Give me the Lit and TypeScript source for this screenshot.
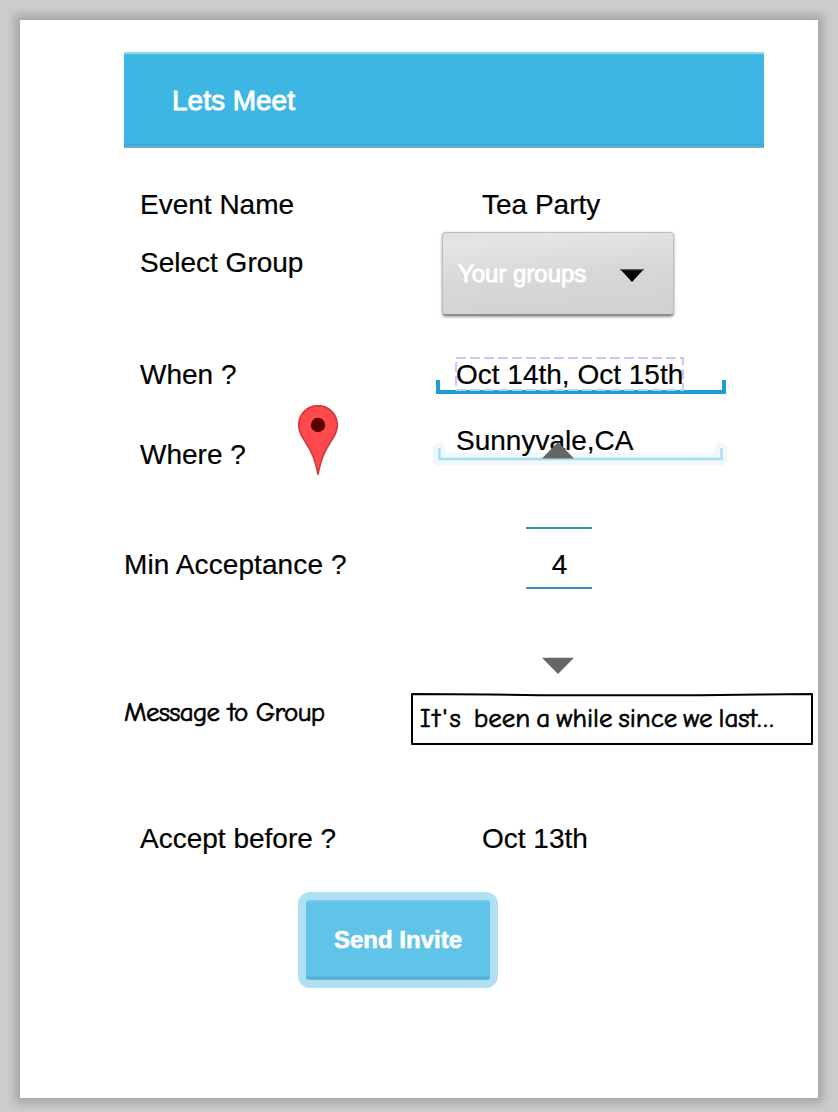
import { LitElement, html, css } from "lit";
import { customElement } from "lit/decorators.js";

@customElement("app-root")
export class AppRoot extends LitElement {
  static styles = css`
    :host {
      display: block;
      box-sizing: border-box;
      height: 1112px;
      padding: 20px 20px 14px;
      background: #ccc;
      overflow: hidden;
      font: 28px/32px "Liberation Sans", Helvetica, Arial, sans-serif;
      color: #000;
      white-space: nowrap;
    }
    .paper {
      width: 798px;
      height: 1078px;
      background: #fff;
      box-shadow: 0 0 9px 5px rgba(0, 0, 0, 0.2);
      display: flex;
      flex-direction: column;
      align-items: flex-start;
      -webkit-text-stroke: 0.2px currentColor;
    }
    svg { display: block; }
    .bar {
      box-sizing: border-box;
      width: 640px;
      height: 96px;
      flex: none;
      margin: 32px 0 0 104px;
      padding: 33px 48px 0;
      color: #fff;
      -webkit-text-stroke: 0.9px #fff;
      background: linear-gradient(#a3daef 0, #8bd0ec 1.5px, #55c0e6 2px, #3db6e4 3.5px, #3db6e4 91px, #35aadb 93px, #5aa9cb 94px, #7fb4cd 96px);
    }
    .row { display: flex; align-items: flex-start; width: 100%; flex: none; }
    .label { box-sizing: border-box; padding-left: 120px; width: 278px; flex: none; }
    .wide { width: 462px; }
    .event { margin-top: 41px; }
    .group { margin-top: 11px; }
    .group .label { padding-top: 15px; width: 422px; }
    .when { margin-top: 40px; }
    .when .label { padding-top: 3px; width: 416px; }
    .where { margin-top: 9px; height: 70px; }
    .where .label { padding-top: 34px; }
    .min { margin-top: -33px; height: 232px; }
    .min .label { padding: 107px 0 0 104px; width: 506px; letter-spacing: 0.1px; }
    .message { margin-top: 18px; height: 54px; }
    .accept { margin-top: 77px; }

    .select {
      box-sizing: border-box;
      width: 232px;
      height: 84px;
      display: flex;
      align-items: center;
      justify-content: space-between;
      padding: 0 29px 0 15px;
      border: 1px solid #bdbdbd;
      border-bottom: 2px solid #8e8e8e;
      border-radius: 4px;
      background: linear-gradient(175deg, #dfdfdf, #e5e5e5 12%, #d8d8d8 50%, #d1d1d1);
      box-shadow: 0 1px 3px rgba(0, 0, 0, 0.4);
      color: #fff;
      font-size: 24px;
      -webkit-text-stroke: 0.9px #fff;
      letter-spacing: -0.02px;
    }
    .select svg { margin-top: 5px; }
    .field { position: relative; height: 40px; width: 290px; padding-left: 20px; box-sizing: border-box; }
    .bracket { position: absolute; left: 0; top: 0; }
    .value { position: relative; display: inline-block; }
    .when .value { padding-top: 3px; }
    .place { margin-left: 95px; padding: 20px 0 0 23px; width: 294px; height: 70px; }
    .stepper { position: relative; width: 66px; display: flex; flex-direction: column; align-items: flex-start; }
    .stepper svg { margin-left: 16px; }
    .number {
      box-sizing: border-box;
      width: 66px;
      height: 62px;
      margin: 68px 0 68px;
      padding: 20px 0 0 1px;
      border-top: 2px solid #3391b8;
      border-bottom: 2px solid #3391b8;
      text-align: center;
    }
    .hand {
      font-family: "Comic Sans MS", "Comic Neue", Inter, sans-serif;
      font-size: 27px;
      word-spacing: -3px;
      -webkit-text-stroke: 0.7px #000;
    }
    .message .label { padding: 5px 0 0 104px; width: 390px; letter-spacing: -0.7px; word-spacing: 0; }
    .box { position: relative; width: 404px; height: 54px; box-sizing: border-box; padding: 11px 0 0 10px; letter-spacing: 0; }
    .start { letter-spacing: 2px; margin-right: 5px; }
    .dots { letter-spacing: 2px; }
    .send {
      box-sizing: border-box;
      width: 200px;
      height: 96px;
      flex: none;
      margin: 37px 0 0 278px;
      padding: 8px;
      border-radius: 12px;
      background: #b0e1f2;
    }
    .face {
      box-sizing: border-box;
      height: 80px;
      padding-top: 24px;
      border-radius: 3px;
      text-align: center;
      font-weight: bold;
      font-size: 24px;
      color: #fff;
      -webkit-text-stroke: 0.6px #fff;
      background: linear-gradient(#7bcce9 0, #60c3e8 3px, #60c3e8 76px, #4ba9cb 78px, #7cbfd8 80px);
    }
  `;

  render() {
    return html`
      <div class="paper">
        <div class="bar">Lets Meet</div>
        <div class="row event">
          <div class="label wide">Event Name</div>
          <div>Tea Party</div>
        </div>
        <div class="row group">
          <div class="label">Select Group</div>
          <div class="select">
            <span>Your groups</span>
            <svg width="24" height="14" viewBox="0 0 24 14"><path d="M0 0H24L12 13Z" fill="#000" /><path d="M0 .7H24" stroke="#555" stroke-width="1.4" /></svg>
          </div>
        </div>
        <div class="row when">
          <div class="label">When ?</div>
          <div class="field">
            <svg class="bracket" width="290" height="40" viewBox="0 0 290 40">
              <path d="M2 24V36H288V24" fill="none" stroke="#1d9fd2" stroke-width="4" />
              <rect x="20" y="2" width="227" height="32" fill="none" stroke="#c9c8fb" stroke-width="2" stroke-dasharray="10 4" />
            </svg>
            <span class="value">Oct 14th, Oct 15th</span>
          </div>
        </div>
        <div class="row where">
          <div class="label">Where ?</div>
          <svg width="40" height="70" viewBox="0 0 40 70">
            <path d="M20 .8C9 .8.8 9.5.8 20c0 7 3 11 7 17.500C14 47 17 54 20 69C23 54 26 47 32.200 37.500C36.200 31 39.200 27 39.200 20C39.200 9.500 31 .8 20 .8Z" fill="#ff4a4d" stroke="#d63a3e" stroke-width="1.800" stroke-linejoin="round" />
            <circle cx="20" cy="20" r="7.200" fill="#590003" />
          </svg>
          <div class="field place">
            <svg class="bracket" width="294" height="70" viewBox="0 0 294 70">
              <path d="M6 44V54H288V44" fill="none" stroke="#eff9fd" stroke-width="13" stroke-linecap="round" stroke-linejoin="round" />
              <path d="M6.500 43V54H288.500V43" fill="none" stroke="#abdcee" stroke-width="2.400" />
            </svg>
            <span class="value">Sunnyvale,CA</span>
          </div>
        </div>
        <div class="row min">
          <div class="label">Min Acceptance ?</div>
          <div class="stepper">
            <svg width="32" height="17" viewBox="0 0 32 17"><path d="M0 16.500L16 0L32 16.500Z" fill="#666" /></svg>
            <div class="number">4</div>
            <svg width="32" height="17" viewBox="0 0 32 17"><path d="M0 .8H32L16 17Z" fill="#666" /></svg>
          </div>
        </div>
        <div class="row message hand">
          <div class="label">Message to Group</div>
          <div class="box">
            <svg class="bracket" width="404" height="54" viewBox="0 0 404 54">
              <path d="M2 2L80 2.500L130 3.200H290L350 2.500L402 2V52H2Z" fill="none" stroke="#000" stroke-width="2" stroke-linejoin="round" />
            </svg>
            <span class="value"><span class="start">It's</span> been a while since we last<span class="dots">...</span></span>
          </div>
        </div>
        <div class="row accept">
          <div class="label wide">Accept before ?</div>
          <div>Oct 13th</div>
        </div>
        <div class="send"><div class="face">Send Invite</div></div>
      </div>
    `;
  }
}
